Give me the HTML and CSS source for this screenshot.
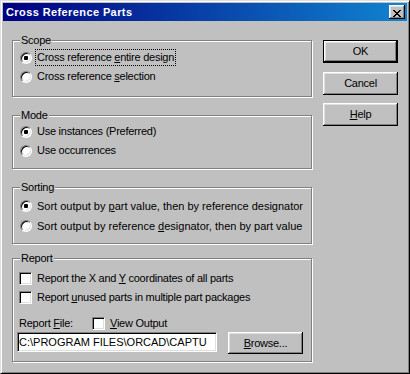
FILE: index.html
```html
<!DOCTYPE html>
<html lang="en">
<head>
    <meta charset="UTF-8">
    <title>Cross Reference Parts</title>
    <link rel="stylesheet" href="styles.css">
</head>
<body>
    <div class="window">
        <div class="titlebar">
            <span class="title">Cross Reference Parts</span>
            <button class="close-btn">
                <svg width="8" height="7" viewBox="0 0 8 7"><path fill="#000" d="M0 0h2v1H0zM6 0h2v1H6zM1 1h2v1H1zM5 1h2v1H5zM2 2h4v1H2zM3 3h2v1H3zM2 4h4v1H2zM1 5h2v1H1zM5 5h2v1H5zM0 6h2v1H0zM6 6h2v1H6z"/></svg>
            </button>
        </div>

        <div class="dialog">
            <div class="groups">
                <!-- Scope -->
                <div class="group group-scope">
                    <div class="group-title">Scope</div>
                    <div class="options">
                        <label class="option"><input type="radio" name="scope" checked><span class="caption focused">Cross reference <u>e</u>ntire design</span></label>
                        <label class="option"><input type="radio" name="scope"><span class="caption">Cross reference <u>s</u>election</span></label>
                    </div>
                </div>

                <!-- Mode -->
                <div class="group group-mode">
                    <div class="group-title">Mode</div>
                    <div class="options">
                        <label class="option"><input type="radio" name="mode" checked><span class="caption">Use instances (Preferred)</span></label>
                        <label class="option"><input type="radio" name="mode"><span class="caption">Use occurrences</span></label>
                    </div>
                </div>

                <!-- Sorting -->
                <div class="group group-sort">
                    <div class="group-title">Sorting</div>
                    <div class="options">
                        <label class="option"><input type="radio" name="sort" checked><span class="caption">Sort output by <u>p</u>art value, then by reference designator</span></label>
                        <label class="option"><input type="radio" name="sort"><span class="caption">Sort output by reference <u>d</u>esignator, then by part value</span></label>
                    </div>
                </div>

                <!-- Report -->
                <div class="group group-report">
                    <div class="group-title">Report</div>
                    <div class="options">
                        <label class="option"><input type="checkbox"><span class="caption">Report the X and <u>Y</u> coordinates of all parts</span></label>
                        <label class="option"><input type="checkbox"><span class="caption">Report <u>u</u>nused parts in multiple part packages</span></label>
                    </div>
                    <div class="file-row">
                        <span class="file-label">Report <u>F</u>ile:</span>
                        <label class="option"><input type="checkbox"><span class="caption"><u>V</u>iew Output</span></label>
                    </div>
                    <div class="field-row">
                        <input type="text" class="field" value="C:\PROGRAM FILES\ORCAD\CAPTU">
                        <button class="btn btn-browse"><u>B</u>rowse...</button>
                    </div>
                </div>
            </div>

            <div class="buttons">
                <button class="btn btn-default">OK</button>
                <button class="btn">Cancel</button>
                <button class="btn"><u>H</u>elp</button>
            </div>
        </div>
    </div>
</body>
</html>
```

FILE: styles.css
```css
* {
    box-sizing: border-box;
    margin: 0;
    padding: 0;
}

body {
    width: 410px;
    height: 374px;
    overflow: hidden;
    background: #c0c0c0;
    color: #000;
    font-family: "Liberation Sans", Arial, sans-serif;
    font-size: 11px;
    line-height: 13px;
    letter-spacing: -0.25px;
}

.window {
    width: 410px;
    height: 374px;
    padding: 2px;
    border: 1px solid;
    border-color: #dfdfdf #000 #000 #dfdfdf;
    box-shadow: inset 1px 1px #fff, inset -1px -1px #808080;
}

.titlebar {
    height: 18px;
    display: flex;
    justify-content: space-between;
    align-items: center;
    padding: 0 2px 0 3px;
    background: linear-gradient(to right, #000080, #1084d0);
}

.title {
    color: #fff;
    font-weight: bold;
    letter-spacing: 0.4px;
}

.close-btn {
    width: 16px;
    height: 14px;
    padding: 3px 0 0 4px;
    border: none;
    background: #c0c0c0;
    box-shadow: inset -1px -1px #000, inset 1px 1px #fff, inset -2px -2px #808080, inset 2px 2px #dfdfdf;
}

.close-btn svg {
    display: block;
}

.dialog {
    display: flex;
    align-items: flex-start;
    padding: 19px 0 0 9px;
}

.groups {
    width: 300px;
}

/* etched group frame */
.group {
    border: 1px solid #808080;
    box-shadow: 1px 1px 0 #fff, inset 1px 1px 0 #fff;
    padding: 0 7px;
}

.group-title {
    display: table;
    margin-top: -7px;
    padding: 0 1px;
    background: #c0c0c0;
}

.options {
    display: flex;
    flex-direction: column;
}

.option {
    display: flex;
    align-items: center;
    height: 19px;
}

.caption {
    margin-left: 3px;
    padding: 1px;
    border: 1px dotted transparent;
    white-space: nowrap;
}

.caption.focused {
    border-color: #000;
}

.group-scope {
    padding-bottom: 10px;
}

.group-scope .options {
    margin-top: 1px;
}

.group-mode {
    margin-top: 18px;
    padding-bottom: 8px;
}

.group-sort {
    margin-top: 18px;
    padding-bottom: 7px;
}

.group-sort .options {
    margin-top: 2px;
}

.group-sort .option {
    height: 20px;
}

.group-sort .caption {
    letter-spacing: 0;
}

.group-report {
    margin-top: 14px;
    padding-bottom: 7px;
}

.group-report .options {
    margin-top: 4px;
}

input[type="radio"] {
    appearance: none;
    flex-shrink: 0;
    width: 12px;
    height: 12px;
    border-radius: 50%;
    border: 1px solid;
    border-color: #808080 #fff #fff #808080;
    box-shadow: inset 1px 1px #000, inset -1px -1px #dfdfdf;
    background: #fff;
}

input[type="radio"]:checked {
    background: radial-gradient(circle, #000 0 2px, #fff 2.5px);
}

input[type="checkbox"] {
    appearance: none;
    flex-shrink: 0;
    width: 13px;
    height: 13px;
    margin-left: -1px;
    border: 1px solid;
    border-color: #808080 #fff #fff #808080;
    box-shadow: inset 1px 1px #000, inset -1px -1px #dfdfdf;
    background: #fff;
}

.file-row {
    display: flex;
    align-items: center;
    height: 17px;
    margin-top: 8px;
}

.file-label {
    width: 73px;
    margin-left: -1px;
}

.file-row input[type="checkbox"] {
    margin-left: 0;
}

.field-row {
    display: flex;
    align-items: flex-start;
    margin-left: -3px;
}

.field {
    width: 200px;
    height: 20px;
    padding: 0 0 0 1px;
    border: 1px solid;
    border-color: #808080 #fff #fff #808080;
    box-shadow: inset 1px 1px #000, inset -1px -1px #dfdfdf;
    background: #fff;
    font: inherit;
    color: #000;
    outline: none;
}

.btn {
    width: 75px;
    height: 23px;
    border: none;
    background: #c0c0c0;
    box-shadow: inset -1px -1px #000, inset 1px 1px #fff, inset -2px -2px #808080, inset 2px 2px #dfdfdf;
    font: inherit;
    letter-spacing: inherit;
    color: #000;
}

.btn-default {
    border: 1px solid #000;
}

.btn-browse {
    height: 22px;
    margin-left: 11px;
}

.buttons {
    display: flex;
    flex-direction: column;
    margin-left: 11px;
}

.buttons .btn + .btn {
    margin-top: 9px;
}

.buttons .btn:last-child {
    margin-top: 8px;
}
```
